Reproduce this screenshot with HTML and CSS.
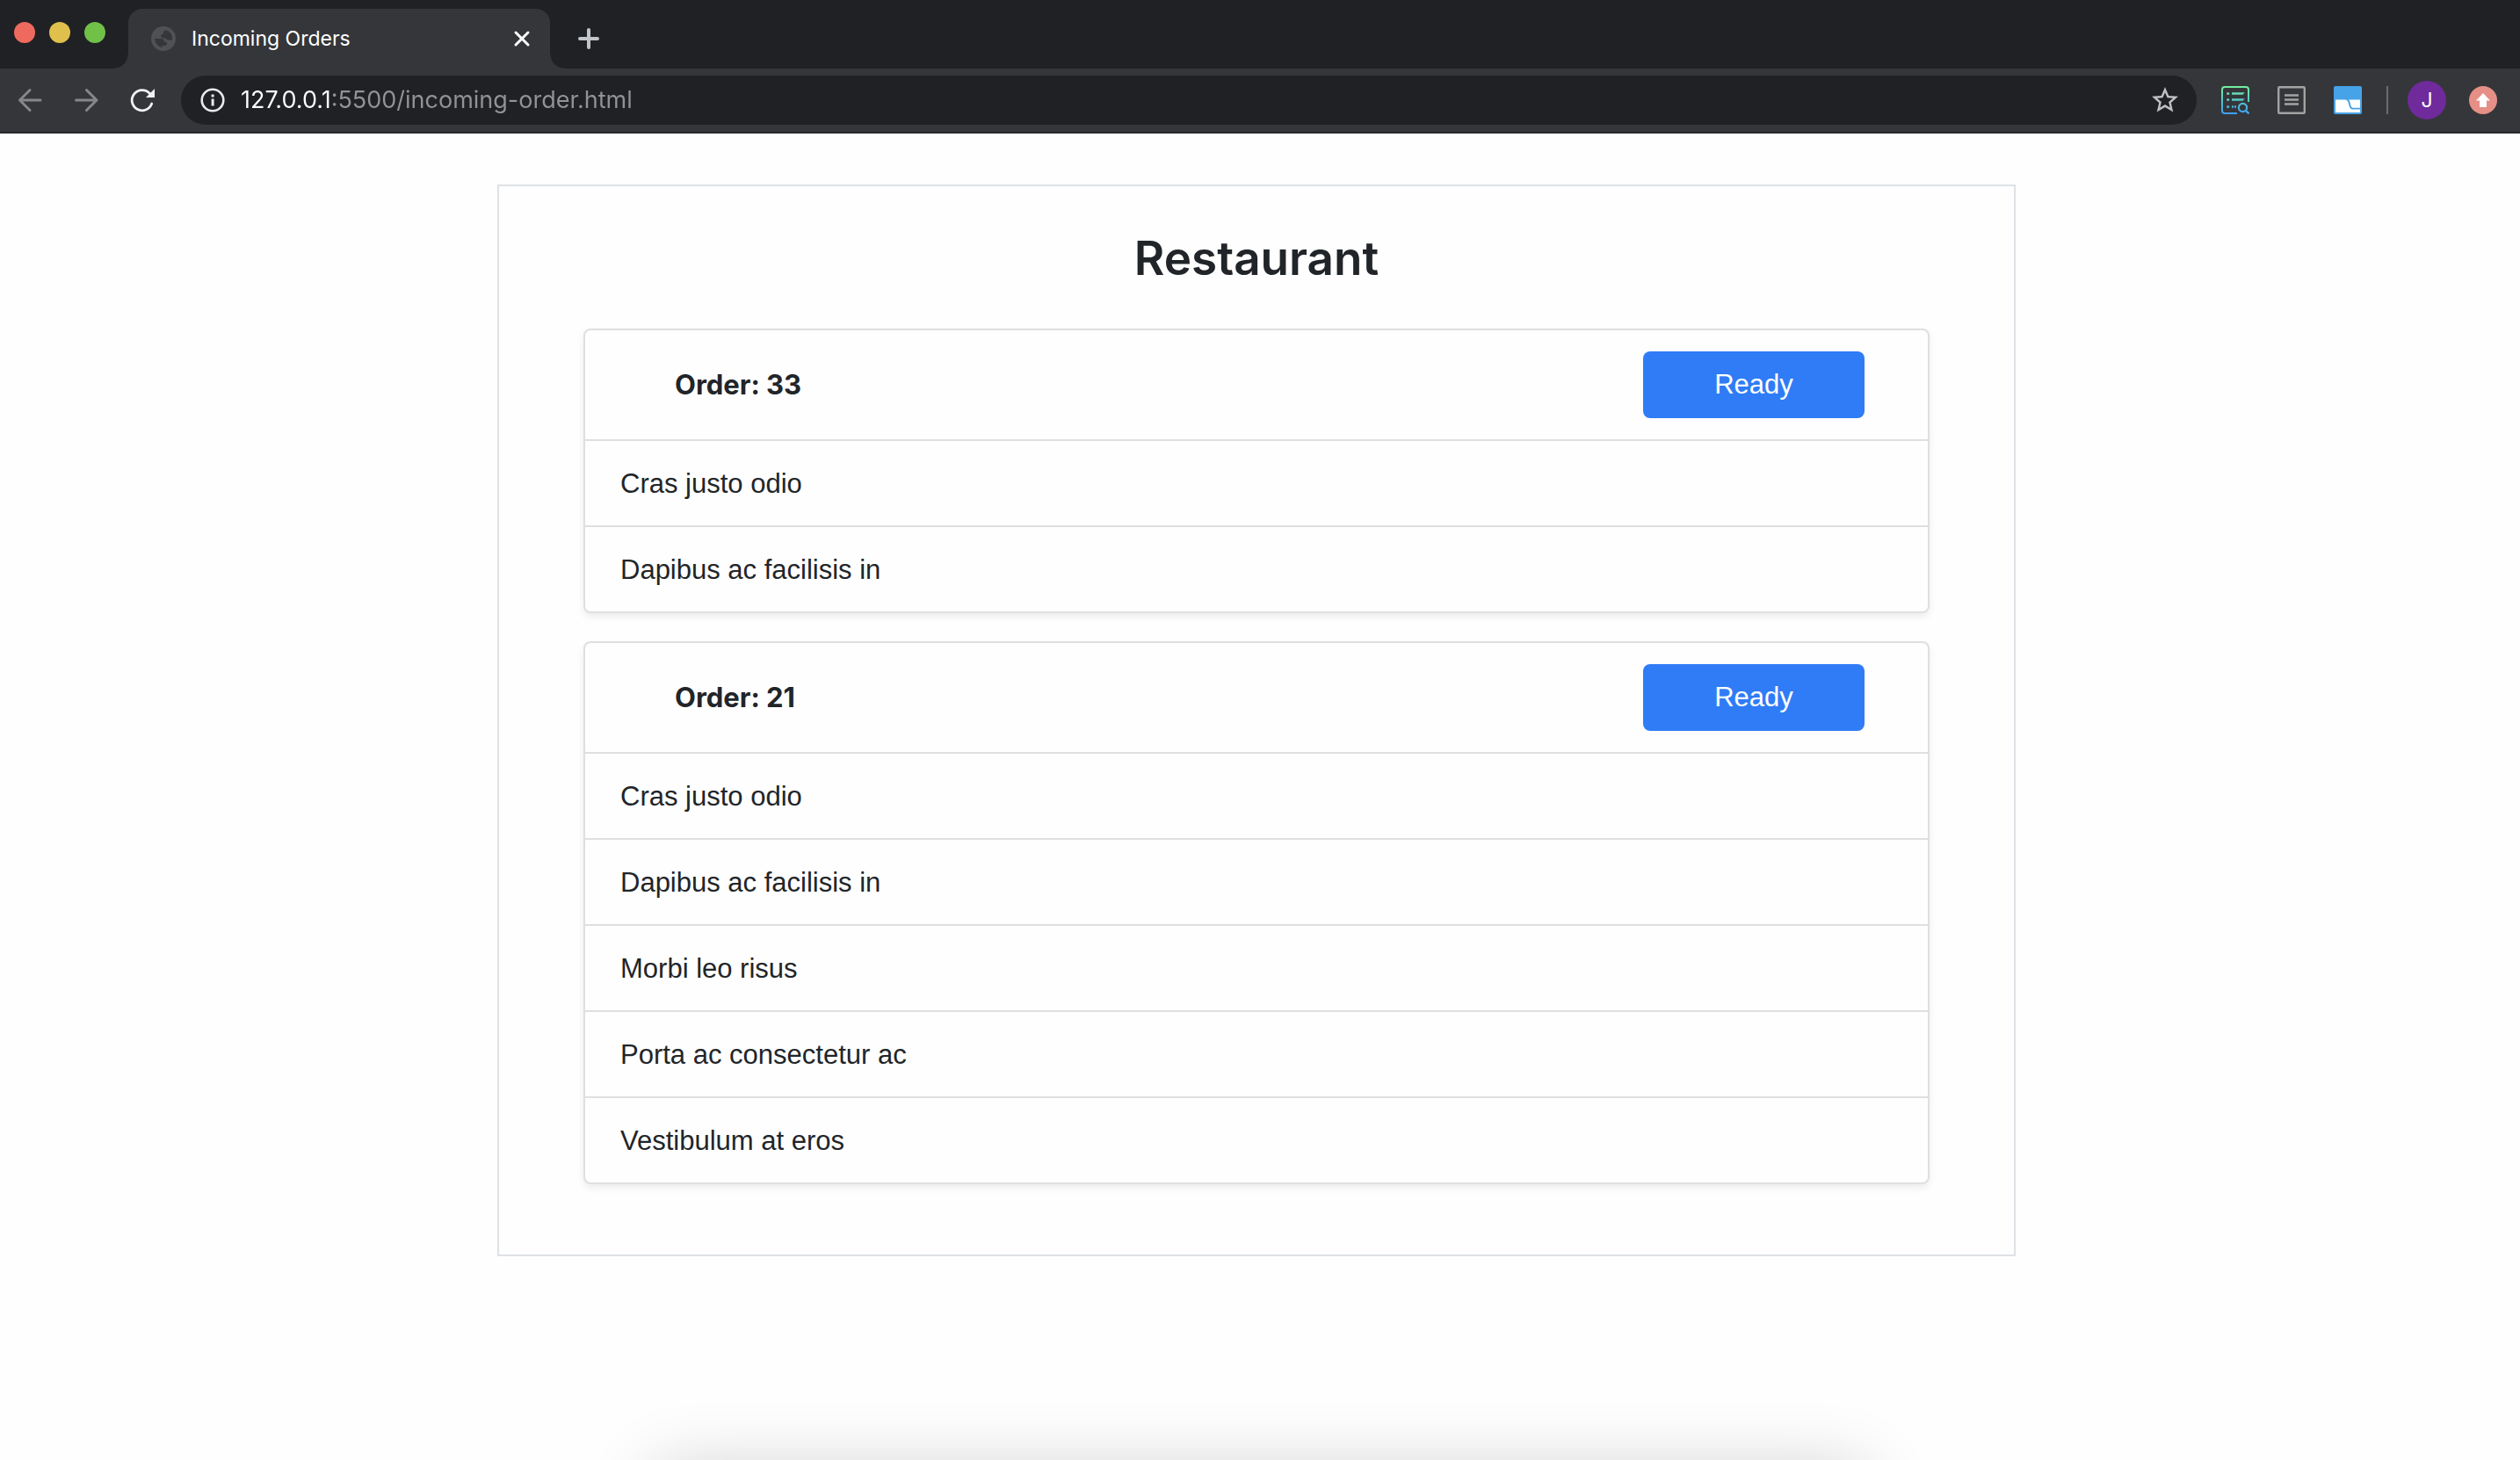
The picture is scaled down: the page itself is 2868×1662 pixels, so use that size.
FILE: index.html
```html
<!DOCTYPE html>
<html lang="en">
<head>
<meta charset="utf-8">
<title>Incoming Orders</title>
<meta name="viewport" content="width=device-width, initial-scale=1">
<link rel="stylesheet" href="styles.css">
</head>
<body>
<header class="browser">
  <div class="tab-strip">
    <div class="window-controls">
      <button class="light light-close" type="button" aria-label="Close window"></button>
      <button class="light light-minimise" type="button" aria-label="Minimise window"></button>
      <button class="light light-zoom" type="button" aria-label="Zoom window"></button>
    </div>
    <div class="tab">
      <svg class="favicon" viewBox="0 0 28 28" aria-hidden="true">
        <circle cx="14" cy="14" r="14" fill="#505155"/>
        <path d="M4 14h7c2.600 0 4 1.200 4 4h3v1.500c0 1.500-1 2.500-2.500 2.500h-3v2A10.200 10.200 0 0 1 4 14z" fill="#35363a"/>
        <path d="M17 4.300A10.200 10.200 0 0 1 24 14c0 .7-.1 1.300-.2 1.800l-4.800-.3c-1.500 0-2-1-2-2h-3.500a2.500 2.500 0 0 1-2.300-2.700c0-1.600 1-2.300 2.500-2.300 0-2.600 1.300-4 3.300-4.200z" fill="#35363a"/>
      </svg>
      <span class="tab-title">Incoming Orders</span>
      <button class="icon-button tab-close" type="button" aria-label="Close tab">
        <svg viewBox="0 0 24 24" fill="none" stroke="#fff" stroke-width="3" stroke-linecap="round"><path d="M5 5l14 14M19 5L5 19"/></svg>
      </button>
    </div>
    <button class="icon-button new-tab" type="button" aria-label="New tab">
      <svg viewBox="0 0 24 24" fill="none" stroke="#c1c4c9" stroke-width="4" stroke-linecap="round"><path d="M12 2v20M2 12h20"/></svg>
    </button>
  </div>
  <div class="toolbar">
    <button class="icon-button nav" type="button" aria-label="Back">
      <svg viewBox="0 0 40 40" fill="none" stroke="#86878a" stroke-width="3" stroke-linecap="round" stroke-linejoin="round"><path d="M32 20H9M20 8.500L8.500 20L20 31.500"/></svg>
    </button>
    <button class="icon-button nav" type="button" aria-label="Forward">
      <svg viewBox="0 0 40 40" fill="none" stroke="#86878a" stroke-width="3" stroke-linecap="round" stroke-linejoin="round"><path d="M8.500 20H31M20.500 8.500L32 20L20.500 31.500"/></svg>
    </button>
    <button class="icon-button nav" type="button" aria-label="Reload">
      <svg viewBox="0 0 40 40"><path d="M30.700 24A11.600 11.600 0 1 1 28.500 12.500" fill="none" stroke="#f1f1f2" stroke-width="2.800" stroke-linecap="round"/><path d="M34 7v10H24z" fill="#f1f1f2"/></svg>
    </button>
    <div class="omnibox">
      <svg class="info" viewBox="0 0 28 28" aria-hidden="true"><circle cx="14" cy="14" r="12.300" fill="none" stroke="#e8eaed" stroke-width="2.600"/><path d="M12.600 12.500h3v8h-3zM12.600 7.500h3v3h-3z" fill="#e8eaed"/></svg>
      <input class="address" type="text" aria-label="Address" value="127.0.0.1:5500/incoming-order.html" spellcheck="false">
      <button class="icon-button star" type="button" aria-label="Bookmark this page">
        <svg viewBox="0 0 24 24" fill="#c0c1c3"><path d="M22 9.240l-7.190-.62L12 2 9.190 8.630 2 9.240l5.460 4.730L5.820 21 12 17.270 18.180 21l-1.630-7.030L22 9.240zM12 15.400l-3.760 2.270 1-4.280-3.320-2.880 4.380-.38L12 6.100l1.710 4.040 4.380.38-3.320 2.880 1 4.280L12 15.400z"/></svg>
      </button>
    </div>
    <div class="extensions">
      <button class="icon-button ext" type="button" aria-label="List search extension">
        <svg viewBox="0 0 32 32" fill="none">
          <defs><linearGradient id="mint" gradientUnits="userSpaceOnUse" x1="0" y1="0" x2="0" y2="32"><stop offset="0" stop-color="#74f09c"/><stop offset="1" stop-color="#3d9df5"/></linearGradient></defs>
          <g stroke="url(#mint)" stroke-width="2">
            <path d="M18 31H4a3 3 0 0 1-3-3V4a3 3 0 0 1 3-3h24a3 3 0 0 1 3 3v14"/>
            <path d="M12 8.500h13v.01M12 15.500h13v.01M12 23.500h2M15 23.500h2" stroke-width="2.600"/>
            <circle cx="24.500" cy="24.500" r="4.600" stroke-width="2.200"/>
            <path d="M28 28l3.500 3.500" stroke-width="2.400"/>
          </g>
          <g fill="url(#mint)"><circle cx="7.700" cy="8.500" r="1.600"/><circle cx="7.700" cy="15.500" r="1.600"/><circle cx="7.700" cy="23.500" r="1.600"/></g>
        </svg>
      </button>
      <button class="icon-button ext" type="button" aria-label="Reader extension">
        <svg viewBox="0 0 32 32" fill="none" stroke="#a4a3a3"><rect x="1.200" y="1.200" width="29.600" height="29.600" rx="1" stroke-width="2.400"/><path d="M8 10.500h16M8 15.500h16M8 20.500h16" stroke-width="2.400"/></svg>
      </button>
      <button class="icon-button ext" type="button" aria-label="Window extension">
        <svg viewBox="0 0 32 32"><rect width="32" height="32" rx="2" fill="#47a3e8"/><path d="M2 15.500h10c3.500 0 4.500 2 5.200 5.500.8 4 1.800 5.600 5.300 5.600H30V29a1 1 0 0 1-1 1H3a1 1 0 0 1-1-1z" fill="#fff"/><path d="M17 15.500h13v9.200h-7.500c-2.200 0-2.800-1-3.500-4.200-.5-2.400-.9-3.900-2-5z" fill="#fff"/></svg>
      </button>
    </div>
    <span class="divider"></span>
    <button class="avatar" type="button" aria-label="Profile J">J</button>
    <button class="icon-button ext" type="button" aria-label="Update available">
      <svg viewBox="0 0 32 32"><circle cx="16" cy="16" r="16" fill="#e58f86"/><path d="M16 8l8 8.500h-4V24h-8v-7.500H8z" fill="#fff"/></svg>
    </button>
  </div>
</header>

<main class="page">
  <section class="restaurant">
    <h1 class="title">Restaurant</h1>
    <article class="order">
      <header class="order-header">
        <h2 class="order-number">Order: 33</h2>
        <button class="ready" type="button">Ready</button>
      </header>
      <ul class="items">
        <li>Cras justo odio</li>
        <li>Dapibus ac facilisis in</li>
      </ul>
    </article>
    <article class="order">
      <header class="order-header">
        <h2 class="order-number">Order: 21</h2>
        <button class="ready" type="button">Ready</button>
      </header>
      <ul class="items">
        <li>Cras justo odio</li>
        <li>Dapibus ac facilisis in</li>
        <li>Morbi leo risus</li>
        <li>Porta ac consectetur ac</li>
        <li>Vestibulum at eros</li>
      </ul>
    </article>
  </section>
</main>
<div class="dock-shadow" aria-hidden="true"></div>
</body>
</html>
```
FILE: styles.css
```css
* {
  box-sizing: border-box;
}

body {
  margin: 0;
  background: #fefefe;
  color: #212529;
  font-family: Inter, "Liberation Sans", sans-serif;
  font-size: 31px;
  line-height: 48px;
}

button,
input {
  margin: 0;
  padding: 0;
  border: 0;
  background: none;
  color: inherit;
  font: inherit;
}

svg {
  display: block;
  width: 100%;
  height: 100%;
}

.icon-button {
  flex: none;
}

/* Browser window */

.browser {
  background: #35363a;
  border-bottom: 2px solid #28292c;
}

.tab-strip {
  display: flex;
  align-items: flex-end;
  height: 78px;
  padding-left: 16px;
  background: #202124;
}

.window-controls {
  display: flex;
  gap: 16px;
  margin-right: 26px;
  padding-bottom: 29px;
}

.light {
  width: 24px;
  height: 24px;
  border-radius: 50%;
}

.light-close {
  background: #ee6a5f;
}

.light-minimise {
  background: #e0c04c;
}

.light-zoom {
  background: #71c048;
}

.tab {
  position: relative;
  display: flex;
  align-items: center;
  width: 480px;
  height: 68px;
  padding: 0 20px 0 26px;
  border-radius: 16px 16px 0 0;
  background: #35363a;
}

.tab::before,
.tab::after {
  position: absolute;
  bottom: 0;
  width: 16px;
  height: 16px;
  content: "";
}

.tab::before {
  right: 100%;
  background: radial-gradient(circle at 0 0, #202124 15px, #35363a 16px);
}

.tab::after {
  left: 100%;
  background: radial-gradient(circle at 100% 0, #202124 15px, #35363a 16px);
}

.favicon {
  flex: none;
  width: 28px;
  height: 28px;
}

.tab-title {
  flex: 1;
  margin-left: 18px;
  color: #fff;
  font-size: 23px;
  line-height: 32px;
}

.tab-close {
  width: 24px;
  height: 24px;
}

.new-tab {
  width: 24px;
  height: 24px;
  margin: 0 0 22px 32px;
}

.toolbar {
  display: flex;
  align-items: center;
  height: 72px;
  padding: 0 26px 0 14px;
}

.nav {
  width: 40px;
  height: 40px;
  margin-right: 24px;
}

.omnibox {
  display: flex;
  flex: 1;
  align-items: center;
  height: 56px;
  padding: 0 18px 0 22px;
  border-radius: 28px;
  background: #202124;
}

.info {
  flex: none;
  width: 28px;
  height: 28px;
}

/* The host is white and the rest of the address is grey */
.address {
  flex: 1;
  min-width: 0;
  height: 40px;
  margin-left: 18px;
  background: linear-gradient(to right, #fff 104px, #929395 104px);
  background-clip: text;
  -webkit-text-fill-color: transparent;
  font-size: 27px;
}

.star {
  width: 36px;
  height: 36px;
}

.extensions {
  display: flex;
  gap: 32px;
  margin: 0 28px;
}

.ext {
  width: 32px;
  height: 32px;
}

.divider {
  width: 2px;
  height: 32px;
  background: #6b6c6f;
}

.avatar {
  width: 44px;
  height: 44px;
  margin: 0 26px 0 22px;
  border-radius: 50%;
  background: #6f2a9b;
  color: #fff;
  font-size: 23px;
  line-height: 44px;
}

/* Orders page */

.page {
  padding: 58px 8px 48px 0;
}

.restaurant {
  max-width: 1728px;
  margin: 0 auto;
  padding: 48px 96px;
  border: 2px solid #dee2e6;
}

.title {
  margin: 0 0 46px;
  font-size: 53px;
  font-weight: 600;
  line-height: 68px;
  text-align: center;
}

.order {
  margin-bottom: 32px;
  border: 2px solid #dfdfdf;
  border-radius: 8px;
  background: #fefefe;
  box-shadow: 0 4px 8px rgba(0, 0, 0, 0.075);
}

.order-header {
  display: flex;
  align-items: center;
  justify-content: space-between;
  padding: 24px 72px 24px 102px;
}

.order-number {
  margin: 0;
  font-size: 31px;
  font-weight: 700;
}

.ready {
  width: 252px;
  height: 76px;
  border-radius: 8px;
  background: #2f7cf6;
  color: #fff;
  font-family: "Liberation Sans", sans-serif;
}

.items {
  margin: 0;
  padding: 0;
  font-family: "Liberation Sans", sans-serif;
  list-style: none;
}

.items li {
  padding: 25px 40px 23px;
  border-top: 2px solid #dfdfdf;
}

/* Shade cast by the dock below the window's edge */
.dock-shadow {
  position: fixed;
  right: 26%;
  bottom: -212px;
  left: 26%;
  height: 200px;
  box-shadow: 0 0 80px rgba(0, 0, 0, 0.2);
}
```
